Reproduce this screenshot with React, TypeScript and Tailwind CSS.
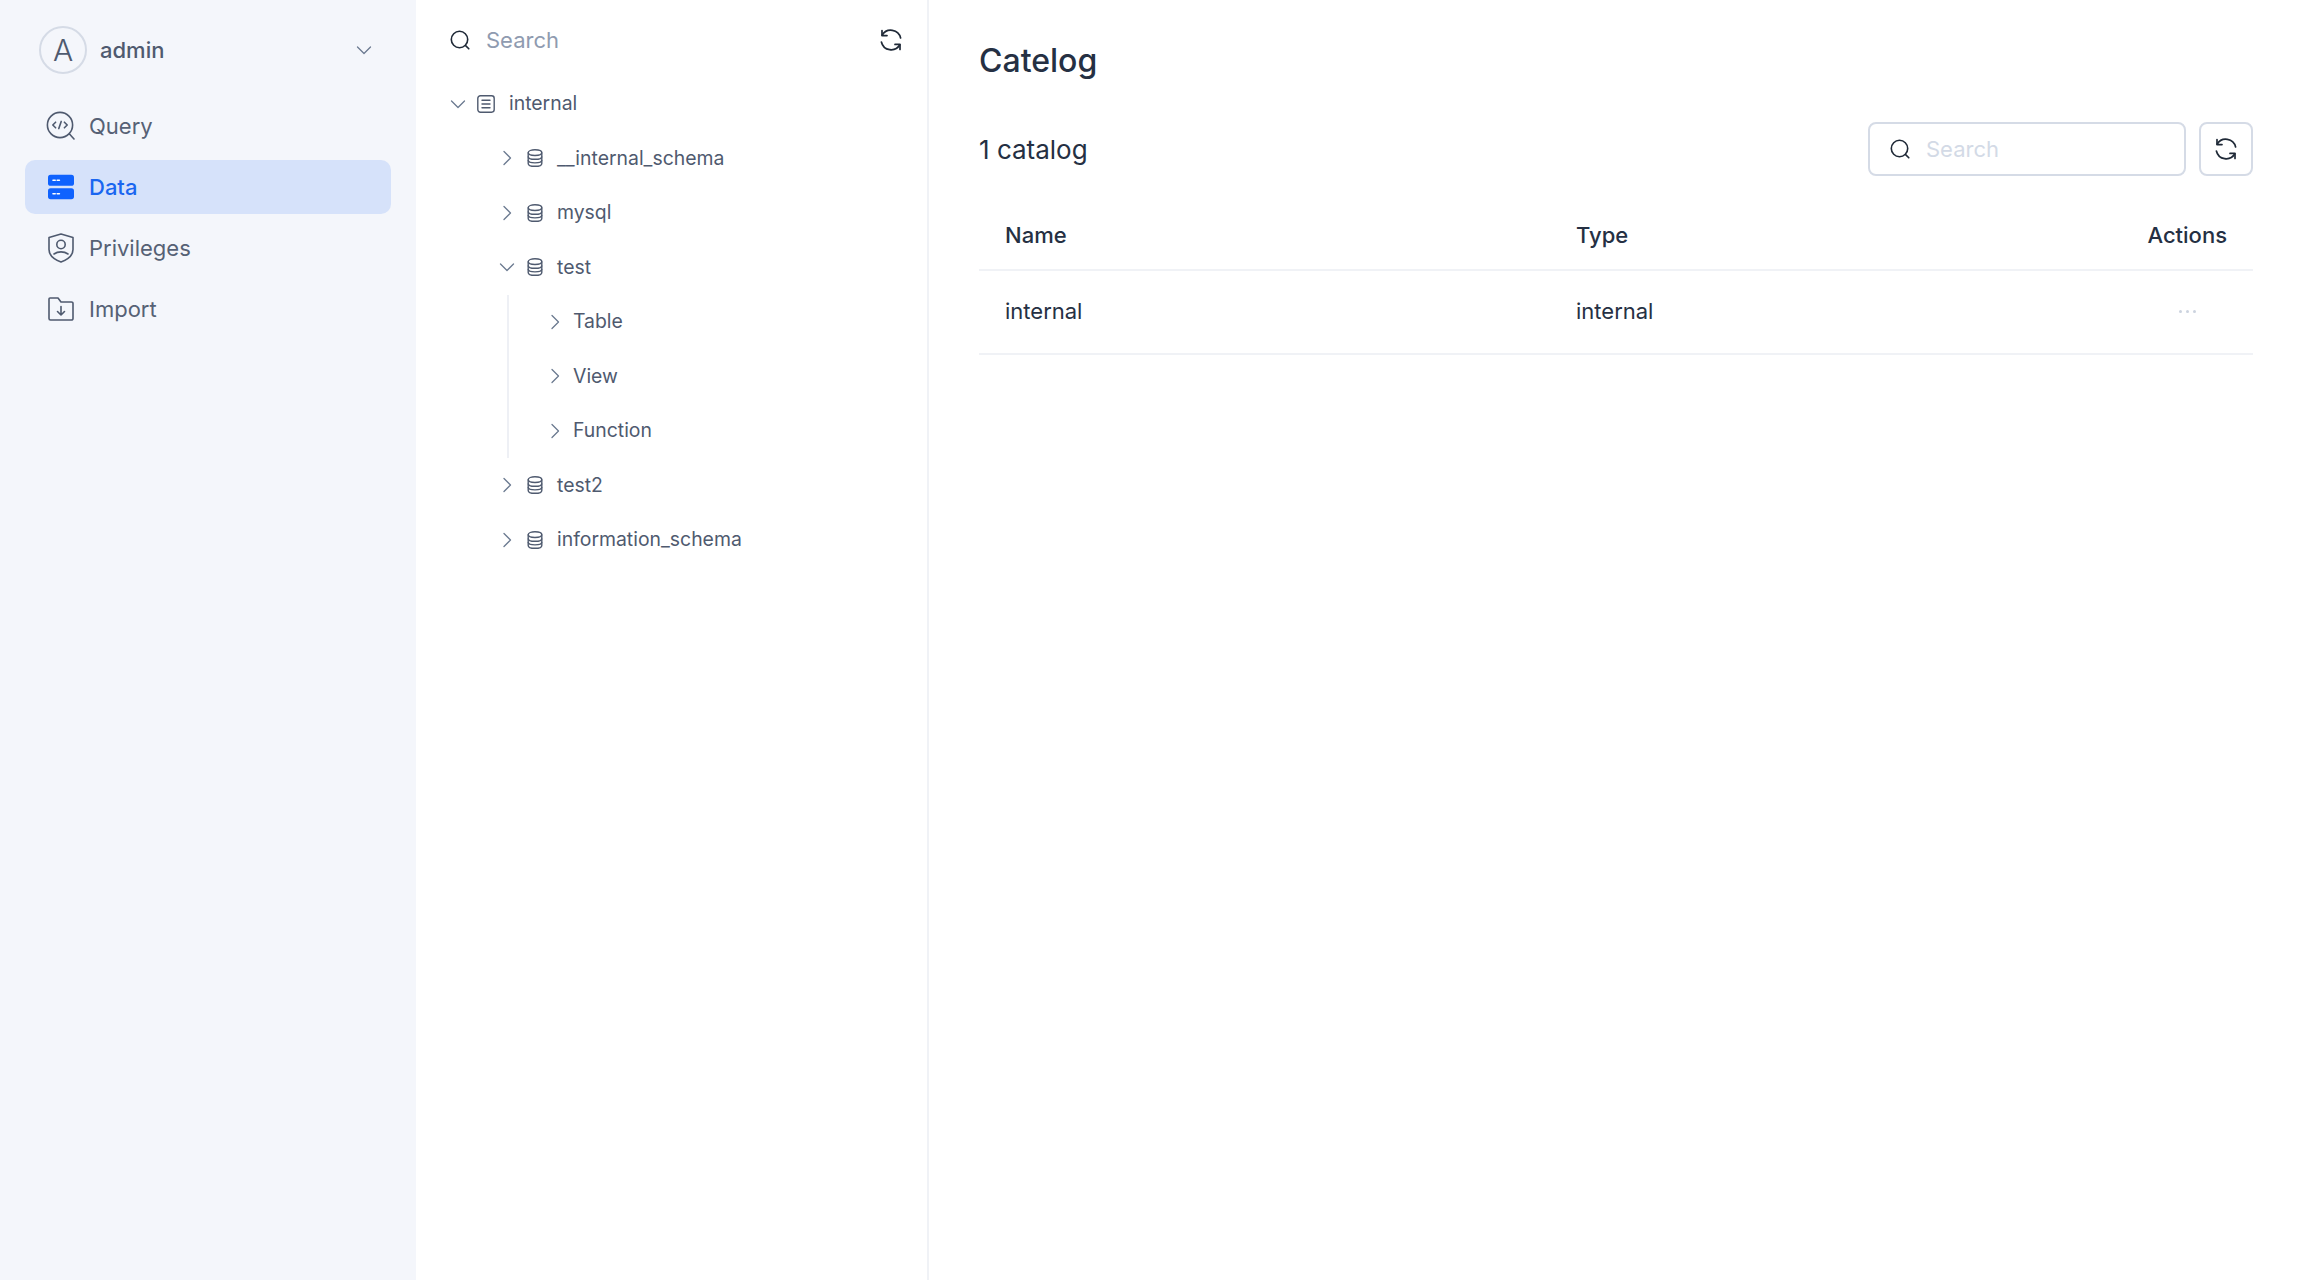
import { FunctionComponent } from "react";

type IconProps = { className?: string };

const ChevronRight: FunctionComponent<IconProps> = ({ className = "" }) => (
  <svg className={className} width="16" height="16" viewBox="0 0 16 16" fill="none" stroke="#6b7a90" strokeWidth="1.3" strokeLinecap="round" strokeLinejoin="round">
    <path d="M5 1.500 11.500 8 5 14.500" />
  </svg>
);

const ChevronDown: FunctionComponent<IconProps> = ({ className = "" }) => (
  <svg className={className} width="16" height="16" viewBox="0 0 16 16" fill="none" stroke="#6b7a90" strokeWidth="1.3" strokeLinecap="round" strokeLinejoin="round">
    <path d="M1.500 5 8 11.500 14.500 5" />
  </svg>
);

const SearchIcon: FunctionComponent<IconProps> = ({ className = "" }) => (
  <svg className={className} width="22" height="22" viewBox="0 0 22 22" fill="none" stroke="#1f2937" strokeWidth="1.6" strokeLinecap="round">
    <circle cx="10.500" cy="10.500" r="8.200" />
    <path d="m16.600 16.600 3.200 3.200" />
  </svg>
);

const RefreshIcon: FunctionComponent<IconProps> = ({ className = "" }) => (
  <svg className={className} width="24" height="24" viewBox="0 0 24 24" fill="none" stroke="#1f2937" strokeWidth="1.700" strokeLinecap="round" strokeLinejoin="round">
    <path d="M3.200 7.200A10 10 0 0 1 21.600 10" />
    <path d="M3 2.600v5h5" />
    <path d="M20.800 16.800A10 10 0 0 1 2.400 14" />
    <path d="M21 21.400v-5h-5" />
  </svg>
);

const DbIcon: FunctionComponent<IconProps> = ({ className = "" }) => (
  <svg className={className} width="16" height="18" viewBox="0 0 16 18" fill="none" stroke="#4f5a6f" strokeWidth="1.400">
    <ellipse cx="8" cy="3.600" rx="6.800" ry="2.900" />
    <path d="M1.200 3.600v10.800c0 1.600 3 2.900 6.800 2.900s6.800-1.300 6.800-2.900V3.600" />
    <path d="M1.200 7.400c0 1.600 3 2.900 6.800 2.900s6.800-1.300 6.800-2.900M1.200 11c0 1.600 3 2.900 6.800 2.900s6.800-1.300 6.800-2.900" />
  </svg>
);

const CatalogIcon: FunctionComponent<IconProps> = ({ className = "" }) => (
  <svg className={className} width="18" height="18" viewBox="0 0 18 18" fill="none" stroke="#4f5a6f" strokeWidth="1.400" strokeLinecap="round">
    <rect x="0.800" y="0.800" width="16.400" height="16.400" rx="2.600" />
    <path d="M5 5.200h8M5 9h8M5 12.800h8" />
  </svg>
);

const QueryIcon: FunctionComponent<IconProps> = ({ className = "" }) => (
  <svg className={className} width="30" height="30" viewBox="0 0 30 30" fill="none" stroke="#4f5a6f" strokeWidth="1.600" strokeLinecap="round" strokeLinejoin="round">
    <circle cx="14" cy="14" r="12.600" />
    <path d="m23.500 23 4.500 5" />
    <path d="M9.600 11.200 6.800 14l2.800 2.800M18.400 11.200l2.800 2.800-2.800 2.800M15.200 10.400l-2.400 7.200" />
  </svg>
);

const DataIcon: FunctionComponent<IconProps> = ({ className = "" }) => (
  <svg className={className} width="26" height="26" viewBox="0 0 26 26">
    <rect y="0.800" width="26" height="11" rx="2.600" fill="#0f62fe" />
    <rect y="14.200" width="26" height="11" rx="2.600" fill="#0f62fe" />
    <path d="M5 6.300h2.200M9.200 6.300h2.200M5 19.700h2.200M9.200 19.700h2.200" stroke="#fff" strokeWidth="1.600" strokeLinecap="round" />
  </svg>
);

const ShieldIcon: FunctionComponent<IconProps> = ({ className = "" }) => (
  <svg className={className} width="26" height="30" viewBox="0 0 26 30" fill="none" stroke="#4f5a6f" strokeWidth="1.600" strokeLinecap="round" strokeLinejoin="round">
    <path d="M13 1 25 4.600v12c0 5.500-5.500 10-12 12.400C6.500 26.600 1 22.100 1 16.600v-12Z" />
    <circle cx="13" cy="11.500" r="4.200" />
    <path d="M6 21c4-2.800 10-2.800 14 0" />
  </svg>
);

const ImportIcon: FunctionComponent<IconProps> = ({ className = "" }) => (
  <svg className={className} width="26" height="24" viewBox="0 0 26 24" fill="none" stroke="#4f5a6f" strokeWidth="1.600" strokeLinecap="round" strokeLinejoin="round">
    <path d="M1 2a1 1 0 0 1 1-1h8l3 4h10.500A1.500 1.500 0 0 1 25 6.500V21.500a1.500 1.500 0 0 1-1.500 1.500h-21A1.500 1.500 0 0 1 1 21.500Z" />
    <path d="M13 9.500v8M9.500 14.500 13 18l3.500-3.500" />
  </svg>
);

const navItems = [
  { label: "Query", icon: <QueryIcon /> },
  { label: "Data", icon: <DataIcon />, active: true },
  { label: "Privileges", icon: <ShieldIcon /> },
  { label: "Import", icon: <ImportIcon /> },
];

const Sidebar = () => (
  <aside className="w-[416px] shrink-0 bg-[#f4f6fb] px-[25px]">
    <div className="h-[99px] pt-[1px] flex items-center pl-[14px] pr-[16px]">
      <div className="w-[48px] h-[48px] rounded-full border-2 border-[#d5dbe6] flex items-center justify-center text-[30px] font-light text-[#4f5a6f]">
        A
      </div>
      <span className="ml-[13px] flex-1 text-[22px] font-medium text-[#4f5a6f]">admin</span>
      <ChevronDown className="mr-[3px]" />
    </div>
    <nav className="flex flex-col gap-[7px]">
      {navItems.map((item) => (
        <div
          key={item.label}
          className={`h-[54px] rounded-[10px] flex items-center pl-[21px] text-[22px] ${
            item.active ? "bg-[#d6e2fa] text-[#1a66f0] font-medium" : "text-[#566175]"
          }`}
        >
          <span className="w-[30px] flex justify-center">{item.icon}</span>
          <span className="ml-[13px]">{item.label}</span>
        </div>
      ))}
    </nav>
  </aside>
);

const TreeRow: FunctionComponent<{
  depth: number;
  label: string;
  open?: boolean;
  icon?: "db" | "catalog";
}> = ({ depth, label, open, icon }) => {
  const pad = depth === 0 ? "pl-[34px]" : depth === 1 ? "pl-[83px]" : "pl-[131px]";
  return (
    <div className={`h-[54.5px] flex items-center text-[19.400px] text-[#4f5a6f] ${pad}`}>
      {open ? <ChevronDown /> : <ChevronRight />}
      {icon === "db" && <DbIcon className="ml-[12px]" />}
      {icon === "catalog" && <CatalogIcon className="ml-[11px]" />}
      <span className={icon ? "ml-[14px]" : "ml-[10px]"}>{label}</span>
    </div>
  );
};

const TreePanel = () => (
  <section className="w-[513px] shrink-0 bg-white border-r-2 border-[#f0f2f6]">
    <div className="h-[76.500px] pt-[4px] flex items-center pl-[33px] pr-[24px]">
      <SearchIcon />
      <span className="ml-[15px] flex-1 text-[22px] text-[#8f9bb0]">Search</span>
      <RefreshIcon />
    </div>
    <div>
      <TreeRow depth={0} label="internal" open icon="catalog" />
      <TreeRow depth={1} label="__internal_schema" icon="db" />
      <TreeRow depth={1} label="mysql" icon="db" />
      <TreeRow depth={1} label="test" open icon="db" />
      <div className="relative">
        <div className="absolute left-[91px] top-0 bottom-0 w-[2px] bg-[#eef0f5]" />
        <TreeRow depth={2} label="Table" />
        <TreeRow depth={2} label="View" />
        <TreeRow depth={2} label="Function" />
      </div>
      <TreeRow depth={1} label="test2" icon="db" />
      <TreeRow depth={1} label="information_schema" icon="db" />
    </div>
  </section>
);

const MainPanel = () => (
  <main className="flex-1 bg-white pl-[50px] pr-[51px] pt-[38px]">
    <h1 className="text-[32px] leading-[46px] font-medium text-[#253043]">Catelog</h1>
    <div className="mt-[38px] flex items-center justify-between h-[54px]">
      <span className="text-[26px] text-[#253043]">1 catalog</span>
      <div className="flex gap-[13px]">
        <div className="w-[318px] h-[54px] rounded-[8px] border-2 border-[#d5dbe6] flex items-center pl-[19px]">
          <SearchIcon />
          <span className="ml-[15px] text-[22px] text-[#d3dae6]">Search</span>
        </div>
        <button className="w-[54px] h-[54px] rounded-[8px] border-2 border-[#d5dbe6] flex items-center justify-center">
          <RefreshIcon />
        </button>
      </div>
    </div>
    <div className="mt-[35px]">
      <div className="grid grid-cols-[571px_1fr_auto] items-center h-[60px] pb-[9px] px-[26px] border-b-2 border-[#f0f2f6] text-[22px] font-medium text-[#253043]">
        <span>Name</span>
        <span>Type</span>
        <span>Actions</span>
      </div>
      <div className="grid grid-cols-[571px_1fr_auto] items-center h-[84px] pb-[2px] px-[26px] border-b-2 border-[#f0f2f6] text-[22px] text-[#253043]">
        <span>internal</span>
        <span>internal</span>
        <span className="w-[80px] flex justify-center gap-[4px]">
          <i className="w-[3px] h-[3px] rounded-full bg-[#ccd3df]" />
          <i className="w-[3px] h-[3px] rounded-full bg-[#ccd3df]" />
          <i className="w-[3px] h-[3px] rounded-full bg-[#ccd3df]" />
        </span>
      </div>
    </div>
  </main>
);

export default function App() {
  return (
    <div className="flex h-[1280px] w-[2304px] font-['Inter',sans-serif]">
      <Sidebar />
      <TreePanel />
      <MainPanel />
    </div>
  );
}
